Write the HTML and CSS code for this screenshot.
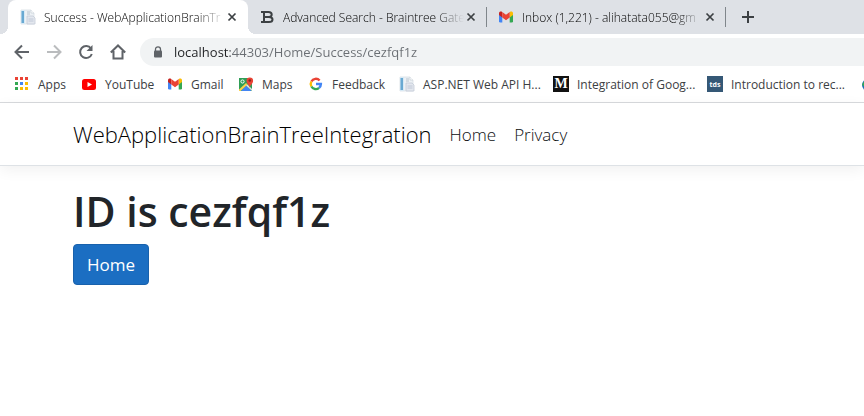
FILE: index.html
```html
<!DOCTYPE html>
<html lang="en">
<head>
<meta charset="utf-8">
<title>Success - WebApplicationBrainTreeIntegration</title>
<link rel="stylesheet" href="styles.css">
</head>
<body>
<svg class="defs" aria-hidden="true">
  <symbol id="doc" viewBox="0 0 16 16">
    <path d="M1 1h10l3 3v11H1z" fill="#edf1f5" stroke="#d3dae1" stroke-width=".7"/>
    <path d="M1 1h4v14H1z" fill="#d7e9f5"/><path d="M1.500 2h2.500v12H1.500z" fill="#69a9d2"/>
    <path d="M7 3h3M7 5h3M7 13h1" stroke="#b9c4ce"/>
    <path d="M11 1v3h3" fill="#fff" stroke="#c5ced6" stroke-width=".7"/>
    <path d="M7 7h6l2 2v6H7z" fill="#e3e7ee" stroke="#c4ccd7" stroke-width=".8"/>
    <path d="M8.500 10h5M8.500 12h5" stroke="#b8c2d0" stroke-width=".8"/>
  </symbol>
  <symbol id="gmail" viewBox="0 0 16 16">
    <path d="M1 4v8.200q0 1.300 1.300 1.300h2V7.200z" fill="#4285f4"/>
    <path d="M15 4v8.200q0 1.300-1.300 1.300h-2V7.200z" fill="#34a853"/>
    <path d="M11.700 4.100v4.400L15 6V4.200c0-1.700-1.800-2.300-3-1.400z" fill="#fbbc04"/>
    <path d="M1 4.200V6l3.300 2.500V4.100L4 2.800C2.800 1.900 1 2.500 1 4.200z" fill="#c5221f"/>
    <path d="M4.300 8.500V3L8 5.800 11.700 3v5.500L8 11.300z" fill="#ea4335"/>
  </symbol>
  <symbol id="close" viewBox="0 0 10 10"><path d="M1.500 1.500l7 7M8.500 1.500l-7 7" stroke="#3c4043" stroke-width="1.700"/></symbol>
</svg>

<header class="browser">
  <div class="tabs">
    <div class="tab tab-active">
      <svg class="icon"><use href="#doc"/></svg>
      <button class="tab-title">Success - WebApplicationBrainTr</button>
      <button class="tab-close" aria-label="Close tab"><svg><use href="#close"/></svg></button>
    </div>
    <div class="tab tab-divided">
      <svg class="icon" viewBox="0 0 16 16"><path d="M2 3h7.500q3.200 0 3.200 2.500T9.500 8H5.500M2 13h8q3.500 0 3.500-2.500T10 8M5 3v10" fill="none" stroke="#3c4043" stroke-width="2"/></svg>
      <button class="tab-title">Advanced Search - Braintree Gate</button>
      <button class="tab-close" aria-label="Close tab"><svg><use href="#close"/></svg></button>
    </div>
    <div class="tab tab-divided">
      <svg class="icon"><use href="#gmail"/></svg>
      <button class="tab-title">Inbox (1,221) - alihatata055@gm</button>
      <button class="tab-close" aria-label="Close tab"><svg><use href="#close"/></svg></button>
    </div>
    <button class="new-tab" aria-label="New tab"><svg viewBox="0 0 12 12"><path d="M6 0v12M0 6h12" stroke="#3c4043" stroke-width="2"/></svg></button>
  </div>

  <div class="toolbar">
    <button class="tool" aria-label="Back"><svg viewBox="0 0 16 16"><path d="M15 8H2M8 1.500L1.500 8 8 14.500"/></svg></button>
    <button class="tool tool-disabled" aria-label="Forward" disabled><svg viewBox="0 0 16 16"><path d="M1 8h13M8 1.500L14.500 8 8 14.500"/></svg></button>
    <button class="tool" aria-label="Reload"><svg viewBox="0 0 16 16"><path d="M13 4.500A6 6 0 1 0 13.800 10"/><path d="M14.500 1v6h-6z" class="solid"/></svg></button>
    <button class="tool" aria-label="Home page"><svg viewBox="0 0 16 16"><path d="M.8 8.500L8 1.500l7.200 7M3.500 7v7.500h9V7"/></svg></button>
    <label class="address">
      <svg class="lock" viewBox="0 0 10 12"><path d="M2.500 5V3.300a2.500 2.500 0 0 1 5 0V5" fill="none" stroke="#5f6368" stroke-width="1.300"/><rect x="1" y="4.500" width="8" height="7" rx="1" fill="#5f6368"/></svg>
      <input class="url" type="text" aria-label="Address" value="localhost:44303/Home/Success/cezfqf1z">
    </label>
  </div>

  <nav class="bookmarks" aria-label="Bookmarks">
    <a href="#"><svg class="icon" viewBox="0 0 16 16"><path d="M1 1h3v3H1zM6 1h3v3H6zM11 1h3v3h-3z" fill="#ea4335"/><path d="M1 6h3v3H1zM1 11h3v3H1z" fill="#34a853"/><path d="M6 6h3v3H6z" fill="#4285f4"/><path d="M11 6h3v3h-3zM6 11h3v3H6zM11 11h3v3h-3z" fill="#fbbc04"/></svg>Apps</a>
    <a href="#"><svg class="icon" viewBox="0 0 16 16"><rect x="1" y="3" width="14" height="11" rx="2.500" fill="#f00"/><path d="M6.500 6v5L11 8.500z" fill="#fff"/></svg>YouTube</a>
    <a href="#"><svg class="icon"><use href="#gmail"/></svg>Gmail</a>
    <a href="#"><svg class="icon" viewBox="0 0 16 16"><path d="M1 2h13v13H1z" fill="#2f9e56"/><path d="M3 15L8 9.500l5.500 5.500z" fill="#4285f4"/><path d="M1 13.500L8 7l1.500 1.500L2.500 15H1z" fill="#fbd14b"/><path d="M9.500 8.500L14 13v2l-6-5.500z" fill="#dfe2e6"/><circle cx="4.500" cy="5.500" r="1.600" fill="none" stroke="#fff"/><path d="M11.700 12c0-3-3.200-4-3.200-7.300a3.300 3.300 0 0 1 6.600 0C15.100 8 11.700 9 11.700 12z" fill="#ea4335"/><circle cx="11.800" cy="4.500" r="1.300" fill="#8c241c"/></svg>Maps</a>
    <a href="#"><svg class="icon" viewBox="0 0 16 16"><g fill="none" stroke-width="2.400"><path d="M3.400 5.500A5 5 0 0 1 11.600 4.500" stroke="#ea4335"/><path d="M3.400 5.500a5 5 0 0 0 0 5" stroke="#fbbc04"/><path d="M3.400 10.500a5 5 0 0 0 7.700 1.300" stroke="#34a853"/><path d="M11.100 11.800A5 5 0 0 0 12.900 8H8" stroke="#4285f4"/></g></svg>Feedback</a>
    <a href="#"><svg class="icon"><use href="#doc"/></svg>ASP.NET Web API H...</a>
    <a href="#"><span class="icon badge-m">M</span>Integration of Goog...</a>
    <a href="#"><span class="icon badge-tds">tds</span>Introduction to rec...</a>
    <a href="#" aria-label="Bookmark"><svg class="icon" viewBox="0 0 16 16"><circle cx="7" cy="9" r="6" fill="#1a73b8"/><path d="M1 9q2-5 5-5l1 4-3 3z" fill="#34a853"/></svg></a>
  </nav>
</header>

<nav class="navbar" aria-label="Main">
  <a class="brand" href="#">WebApplicationBrainTreeIntegration</a>
  <a class="nav-link" href="#">Home</a>
  <a class="nav-link" href="#">Privacy</a>
</nav>

<main class="content">
  <h1>ID is cezfqf1z</h1>
  <button class="primary">Home</button>
</main>
</body>
</html>
```
FILE: styles.css
```css
* { box-sizing: border-box; }
body {
  margin: 0;
  background: #fff;
  color: #212529;
  font-family: "Open Sans", "Noto Sans", sans-serif;
  overflow-x: hidden;
}
button, input { font: inherit; margin: 0; padding: 0; border: 0; background: none; }
a { color: inherit; text-decoration: none; }
svg { display: block; }
.defs { display: none; }
.icon { width: 16px; height: 16px; flex: none; }

.browser {
  border-bottom: 1px solid #d8dadd;
  font-size: 12px;
  color: #3c4043;
  overflow: hidden;
}

.tabs { display: flex; height: 34px; padding-left: 8px; background: #dee1e6; }
.tab { display: flex; align-items: center; width: 239px; padding: 0 11px; }
.tab-active { position: relative; padding-left: 12px; width: 240px; background: #fff; border-radius: 8px 8px 0 0; }
.tab-active::before, .tab-active::after {
  content: "";
  position: absolute;
  bottom: 0;
  width: 8px;
  height: 8px;
}
.tab-active::before { left: -8px; background: radial-gradient(circle at 0 0, #dee1e6 8px, #fff 8px); }
.tab-active::after { right: -8px; background: radial-gradient(circle at 100% 0, #dee1e6 8px, #fff 8px); }
.tab-divided { background: linear-gradient(#80868b, #80868b) right center / 1px 20px no-repeat; }
.tab-title {
  flex: 1;
  min-width: 0;
  margin: 0 2px 0 8px;
  overflow: hidden;
  white-space: nowrap;
  text-align: left;
  font-weight: 300;
  color: #000;
  mask-image: linear-gradient(90deg, #000 calc(100% - 28px), transparent);
}
.tab-close svg { width: 10px; height: 10px; }
.new-tab { margin-left: 16px; }
.new-tab svg { width: 12px; height: 12px; }

.toolbar { display: flex; align-items: center; height: 36px; padding-left: 14px; gap: 16px; }
.tool svg { width: 16px; height: 16px; fill: none; stroke: #5f6368; stroke-width: 2; }
.tool-disabled svg { stroke: #babcbe; }
.tool .solid { fill: #5f6368; stroke: none; }
.address {
  display: flex;
  align-items: center;
  flex: 1;
  height: 28px;
  padding-left: 13px;
  gap: 11px;
  margin-right: -40px;
  margin-left: -2px;
  border-radius: 14px;
  background: #f1f3f4;
}
.lock { width: 10px; height: 12px; }
.url {
  flex: 1;
  min-width: 0;
  font-size: 13px;
  color: transparent;
  background: linear-gradient(90deg, #202124 56px, #6a6e73 56px);
  background-clip: text;
  outline: 0;
}

.bookmarks {
  display: grid;
  grid-template-columns: 67px 86px 71px 70px 91px 154px 154px 154px 16px;
  align-items: center;
  height: 32px;
  padding: 0 0 4px 14px;
}
.bookmarks a { display: flex; align-items: center; gap: 8px; white-space: nowrap; }
.badge-m, .badge-tds { display: grid; place-items: center; color: #fff; font-weight: 700; }
.badge-m { background: #111; font-family: "Liberation Serif", serif; font-size: 14px; }
.badge-tds { background: #355876; font-size: 7px; }

.navbar {
  display: flex;
  align-items: center;
  height: 63px;
  padding: 0 73px;
  gap: 18px;
  border-bottom: 1px solid #dee2e6;
  box-shadow: 0 4px 14px rgba(0, 0, 0, 0.06);
  font-size: 17px;
  font-weight: 300;
  color: #0c0e10;
}
.brand { font-size: 22px; color: #000; }

.content { padding: 18px 73px; }
h1 { margin: 0 0 6px; font-size: 41px; line-height: 54px; font-weight: 600; }
.primary {
  height: 41px;
  padding: 0 13px;
  border: 1px solid #1861ac;
  border-radius: 4px;
  background: #1b6ec2;
  color: #fff;
  font-size: 17px;
}
```
